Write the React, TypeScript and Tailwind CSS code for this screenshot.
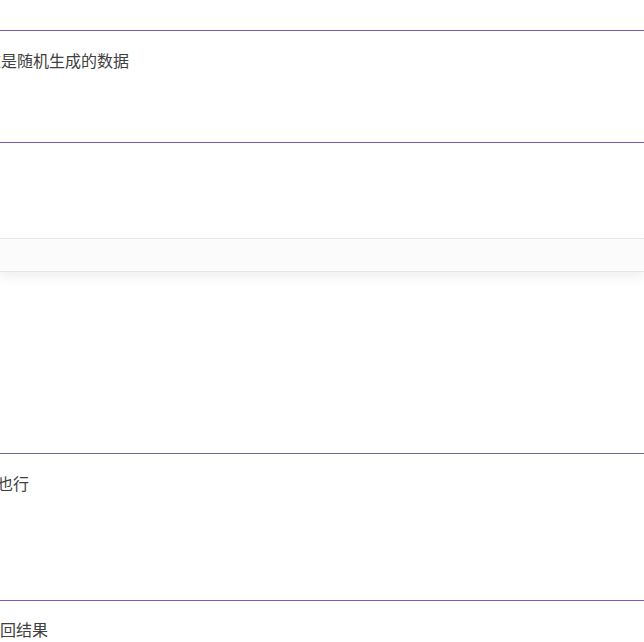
import React from "react";

const font = { fontFamily: '"Noto Sans CJK SC", "Noto Sans", sans-serif' };

export default function App() {
  return (
    <div className="w-[644px] h-[642px] overflow-hidden bg-white text-[#404040]" style={font}>
      <div className="h-[30px]" />
      <div className="h-px bg-[#7e57c2]" />
      <p className="mt-[17px] -ml-[15px] text-[16px] leading-[24px] whitespace-nowrap">这是随机生成的数据</p>
      <div className="h-[70px]" />
      <div className="h-px bg-[#7e57c2]" />
      <div className="h-[95px]" />
      <div className="h-[34px] border-y border-[#e6e6e6] bg-[#fbfbfb] shadow-[0_6px_10px_rgba(0,0,0,0.06)]" />
      <div className="h-[181px]" />
      <div className="h-px bg-[#76629e]" />
      <p className="mt-[17px] -ml-[19px] text-[16px] leading-[24px] whitespace-nowrap">你也行</p>
      <div className="h-[105px]" />
      <div className="h-px bg-[#7e57c2]" />
      <p className="mt-[16px] text-[16px] leading-[24px] whitespace-nowrap">回结果</p>
    </div>
  );
}
